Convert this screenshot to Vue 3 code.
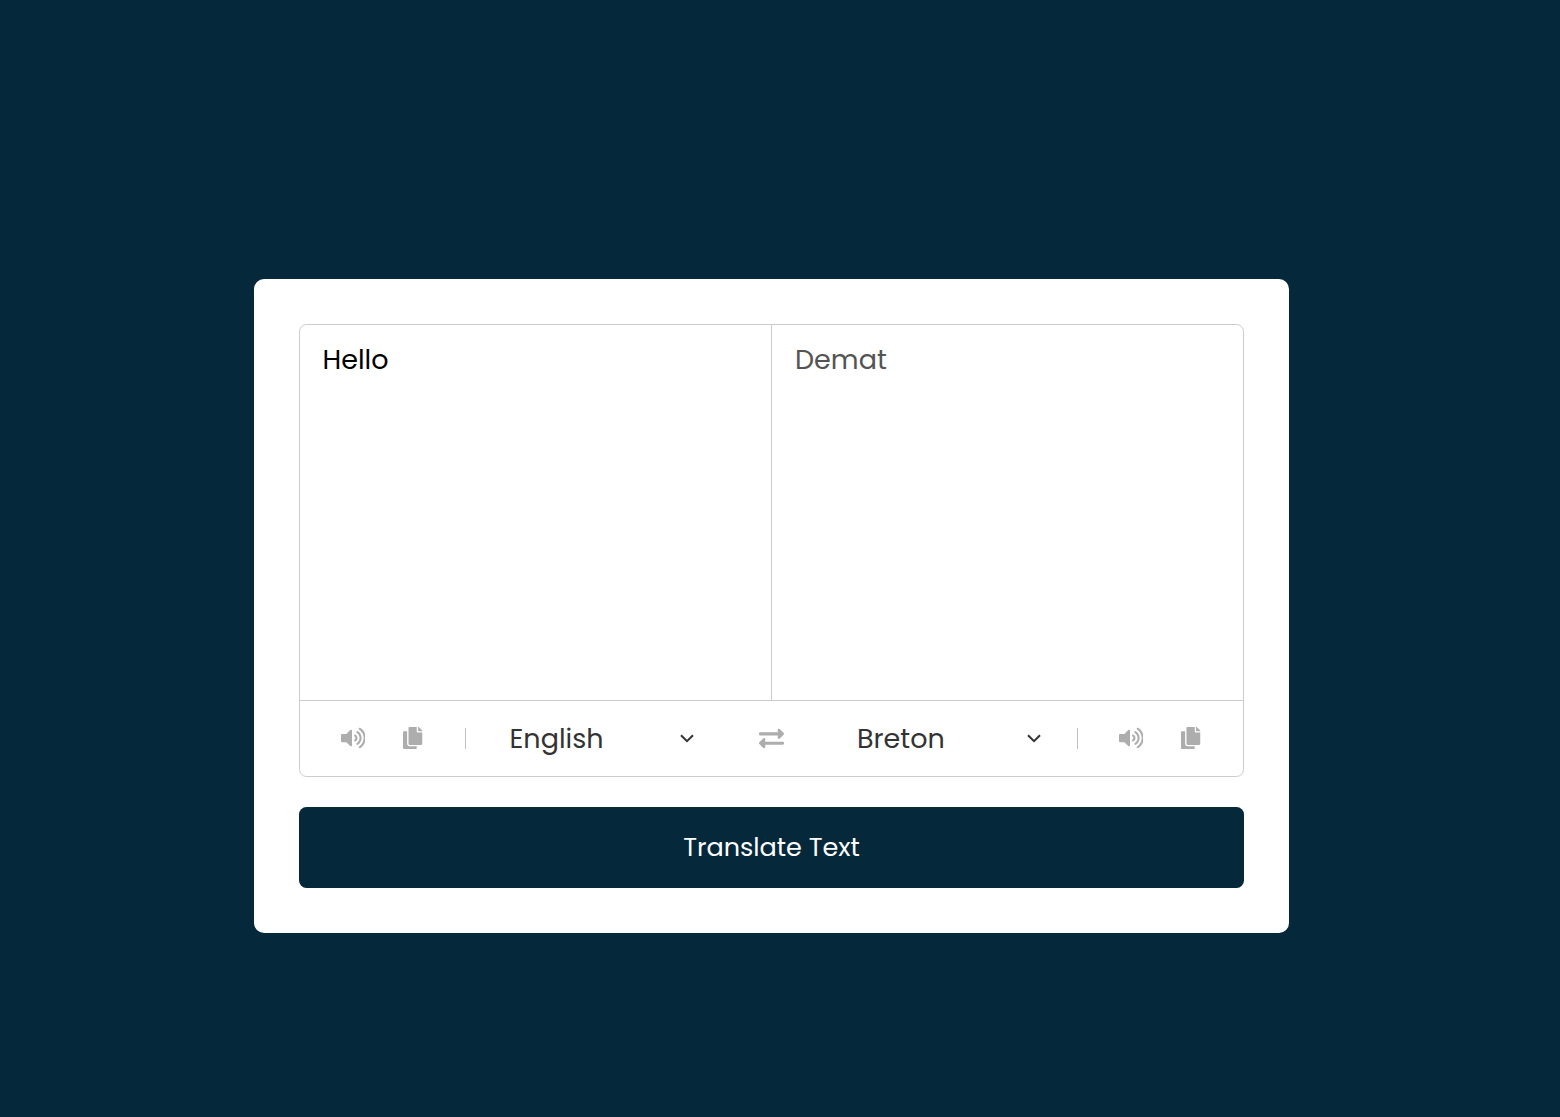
<script setup>
const icons = {
  volume: {
    box: '0 0 576 512',
    d: 'M215.03 71.05L126.06 160H24c-13.26 0-24 10.74-24 24v144c0 13.25 10.74 24 24 24h102.06l88.97 88.95c15.03 15.03 40.97 4.47 40.97-16.97V88.02c0-21.46-25.96-31.98-40.97-16.97zm233.32-51.08c-11.17-7.33-26.18-4.24-33.51 6.95-7.34 11.17-4.22 26.18 6.95 33.51 66.27 43.49 105.82 116.6 105.82 195.58 0 78.98-39.55 152.09-105.82 195.58-11.17 7.32-14.29 22.34-6.95 33.5 7.04 10.71 21.93 14.56 33.51 6.95C528.27 439.58 576 351.33 576 256S528.27 72.43 448.35 19.97zM480 256c0-63.53-32.06-121.94-85.77-156.24-11.19-7.14-26.03-3.82-33.12 7.46s-3.78 26.21 7.41 33.36C408.27 165.97 432 209.11 432 256s-23.73 90.02-63.48 115.42c-11.19 7.14-14.5 22.07-7.41 33.36 6.51 10.36 21.12 15.14 33.12 7.46C447.94 377.94 480 319.53 480 256zm-141.77-76.87c-11.58-6.33-26.19-2.16-32.61 9.45-6.39 11.61-2.16 26.2 9.45 32.61C327.98 228.28 336 241.63 336 256c0 14.38-8.02 27.72-20.92 34.81-11.61 6.41-15.84 21-9.45 32.61 6.43 11.66 21.05 15.8 32.61 9.45 28.23-15.55 45.77-45 45.77-76.88s-17.54-61.32-45.78-76.86z'
  },
  copy: {
    box: '0 0 448 512',
    d: 'M320 448v40c0 13.255-10.745 24-24 24H24c-13.255 0-24-10.745-24-24V120c0-13.255 10.745-24 24-24h72v296c0 30.879 25.121 56 56 56h168zm0-344V0H152c-13.255 0-24 10.745-24 24v368c0 13.255 10.745 24 24 24h272c13.255 0 24-10.745 24-24V128H344c-13.2 0-24-10.8-24-24zm120.971-31.029L375.029 7.029A24 24 0 0 0 358.059 0H352v96h96v-6.059a24 24 0 0 0-7.029-16.97z'
  },
  swap: {
    box: '0 0 512 512',
    d: 'M0 168v-16c0-13.255 10.745-24 24-24h360V80c0-21.367 25.899-32.042 40.971-16.971l80 80c9.372 9.373 9.372 24.569 0 33.941l-80 80C409.956 271.982 384 261.456 384 240v-48H24c-13.255 0-24-10.745-24-24zm488 152H128v-48c0-21.314-25.862-32.08-40.971-16.971l-80 80c-9.372 9.373-9.372 24.569 0 33.941l80 80C102.057 463.997 128 453.437 128 432v-48h360c13.255 0 24-10.745 24-24v-16c0-13.255-10.745-24-24-24z'
  }
}
</script>

<template>
  <main class="page">
    <section class="card">
      <div class="wrapper">
        <div class="texts">
          <div class="pane source"><span>Hello</span></div>
          <div class="pane target"><span>Demat</span></div>
        </div>
        <div class="controls">
          <div class="tools from">
            <svg class="volume" :viewBox="icons.volume.box"><path :d="icons.volume.d" /></svg>
            <svg class="copy" :viewBox="icons.copy.box"><path :d="icons.copy.d" /></svg>
          </div>
          <div class="select first">
            <span>English</span>
            <svg class="chevron" viewBox="0 0 14 9"><path d="M1 1.2 7 7.2 13 1.2" /></svg>
          </div>
          <svg class="swap" :viewBox="icons.swap.box"><path :d="icons.swap.d" /></svg>
          <div class="select second">
            <span>Breton</span>
            <svg class="chevron" viewBox="0 0 14 9"><path d="M1 1.2 7 7.2 13 1.2" /></svg>
          </div>
          <div class="tools to">
            <svg class="volume" :viewBox="icons.volume.box"><path :d="icons.volume.d" /></svg>
            <svg class="copy" :viewBox="icons.copy.box"><path :d="icons.copy.d" /></svg>
          </div>
        </div>
      </div>
      <button class="translate"><span>Translate Text</span></button>
    </section>
  </main>
</template>

<style>
body {
  background: #05283b;
}
</style>

<style scoped>
* {
  box-sizing: border-box;
}
.page {
  height: 1117px;
  padding: 279px 0 0 254px;
  background: #05283b;
  font-family: Poppins, Inter, sans-serif;
  font-size: 27px;
  font-weight: 400;
}
.card {
  width: 1035px;
  height: 654px;
  padding: 45px;
  border-radius: 10px;
  background: #fff;
}
.wrapper {
  height: 453px;
  border: 1px solid #ccc;
  border-radius: 7.5px;
}
.texts {
  display: flex;
  height: 376px;
  border-bottom: 1px solid #ccc;
}
.pane {
  padding: 15px 22.5px;
  line-height: 40px;
}
.source {
  width: 472px;
  border-right: 1px solid #ccc;
  color: #000;
}
.target {
  flex: 1;
  padding-left: 23px;
  color: #545454;
}
.controls {
  display: flex;
  align-items: center;
  height: 75px;
}
.controls svg {
  display: block;
  flex: none;
  fill: #adadad;
}
.tools {
  display: flex;
  align-items: center;
  height: 21px;
}
.tools.from {
  width: 166px;
  padding-left: 40.5px;
  border-right: 1px solid #bfbfbf;
}
.tools.to {
  margin-left: 36px;
  padding-left: 40.5px;
  border-left: 1px solid #bfbfbf;
}
.volume {
  width: 24.75px;
  height: 22px;
  margin-bottom: 1px;
}
.copy {
  width: 19.25px;
  height: 22px;
  margin: 0 0 1px 38px;
}
.select {
  display: flex;
  align-items: center;
  justify-content: space-between;
  width: 184px;
  line-height: 40px;
  color: #333;
}
.select.first {
  width: 184.5px;
  margin-left: 43.5px;
}
.select.second {
  margin-left: 73px;
}
.controls .chevron {
  width: 14px;
  height: 9px;
  fill: none;
  stroke: #333;
  stroke-width: 2;
}
.swap {
  width: 25px;
  height: 25px;
  margin: 0.5px 0 0 65px;
}
.translate {
  display: block;
  width: 100%;
  height: 81px;
  margin-top: 30px;
  padding: 0;
  border: 0;
  border-radius: 7.5px;
  background: #05283b;
  color: #fff;
  font: inherit;
  font-size: 25.5px;
}
</style>
